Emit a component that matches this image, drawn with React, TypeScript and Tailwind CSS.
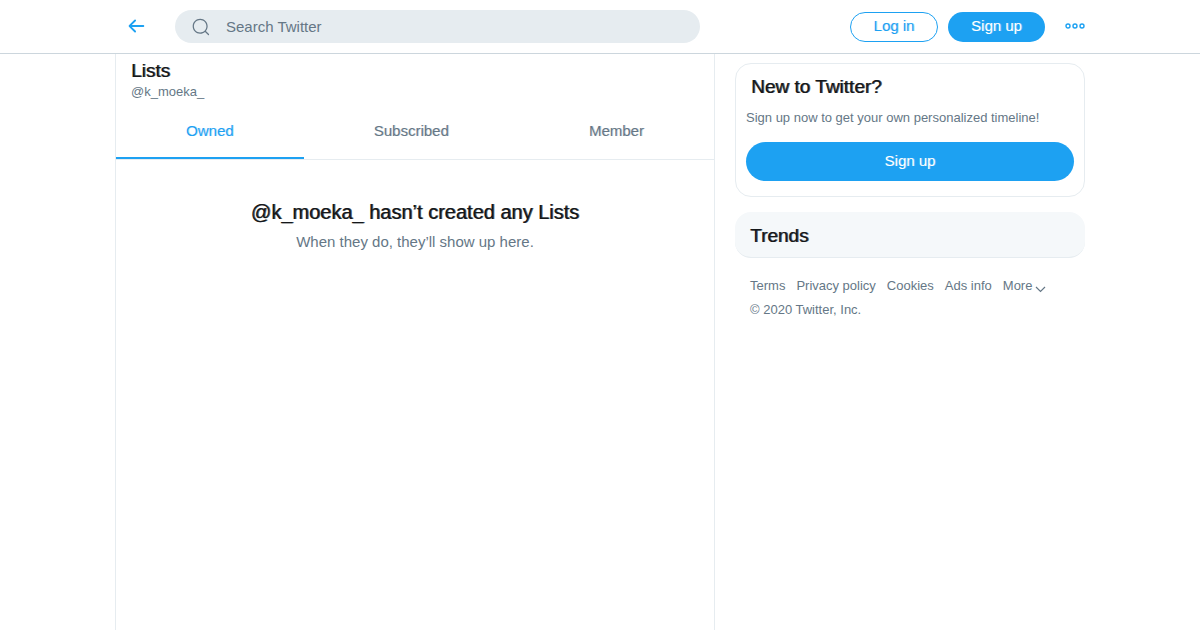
import { useState } from 'react';

const tabs = ['Owned', 'Subscribed', 'Member'];

const footerLinks = ['Terms', 'Privacy policy', 'Cookies', 'Ads info'];

// regular letter widths with slightly heavier strokes
const heading = 'leading-6 text-[#14171a] [text-shadow:1px_0_0_rgb(20_23_26/0.7)]';

function Header() {
  return (
    <header className="border-b border-[#ccd6dd] bg-white">
      <div className="mx-auto flex h-[53px] max-w-[970px] items-center">
        <button type="button" aria-label="Back" className="ml-2.5 shrink-0 pb-px text-[#1da1f2]">
          <svg viewBox="0 0 24 24" className="size-[22px]" fill="currentColor">
            <path d="M20 11H7.414l4.293-4.293a1 1 0 1 0-1.414-1.414l-6 6a1 1 0 0 0 0 1.414l6 6a.997.997 0 0 0 1.414 0 1 1 0 0 0 0-1.414L7.414 13H20a1 1 0 1 0 0-2z" />
          </svg>
        </button>

        <label className="ml-7 flex h-[33px] max-w-[525px] flex-1 items-center rounded-full bg-[#e6ecf0] pl-4">
          <svg viewBox="0 0 24 24" className="size-5 shrink-0" fill="#657786">
            <path d="M21.53 20.47l-3.66-3.66C19.195 15.24 20 13.214 20 11c0-4.97-4.03-9-9-9s-9 4.03-9 9 4.03 9 9 9c2.215 0 4.24-.804 5.808-2.13l3.66 3.66c.147.146.34.22.53.22s.385-.073.53-.22c.295-.293.295-.767.002-1.06zM3.5 11c0-4.135 3.365-7.5 7.5-7.5s7.5 3.365 7.5 7.5-3.365 7.5-7.5 7.5-7.5-3.365-7.5-7.5z" />
          </svg>
          <input
            type="search"
            aria-label="Search Twitter"
            placeholder="Search Twitter"
            className="ml-[15px] w-full bg-transparent text-[15px] leading-5 outline-none placeholder:text-[#657786]"
          />
        </label>

        <div className="ml-auto flex items-center">
          <button
            type="button"
            className="h-[30px] w-[88px] rounded-full border border-[#1da1f2] pb-0.5 text-[15px] leading-5 text-[#1da1f2] [text-shadow:1px_0_0_rgb(29_161_242/0.3)]"
          >
            Log in
          </button>
          <button
            type="button"
            className="ml-2.5 h-[30px] w-[97px] rounded-full bg-[#1da1f2] pb-0.5 text-[15px] leading-5 text-white [text-shadow:1px_0_0_rgb(255_255_255/0.3)]"
          >
            Sign up
          </button>
          <button type="button" aria-label="More menu" className="ml-5 pb-px text-[#1da1f2]">
            <svg viewBox="0 0 20 20" className="size-5" fill="none" stroke="currentColor" strokeWidth="1.4">
              <circle cx="3" cy="10" r="2" />
              <circle cx="10" cy="10" r="2" />
              <circle cx="17" cy="10" r="2" />
            </svg>
          </button>
        </div>
      </div>
    </header>
  );
}

function Lists() {
  const [active, setActive] = useState('Owned');

  return (
    <main className="max-w-[600px] flex-1 border-x border-[#e6ecf0]">
      <div className="px-[15px] pt-[5px]">
        <h1 className={`text-[19px] ${heading}`}>Lists</h1>
        <p className="text-[13px] leading-[18px] text-[#657786]">@k_moeka_</p>
      </div>

      <div role="tablist" className="mt-[3px] flex border-b border-[#e6ecf0]">
        {tabs.map((tab) => (
          <button
            key={tab}
            type="button"
            role="tab"
            aria-selected={tab === active}
            onClick={() => setActive(tab)}
            className={`h-[55px] flex-auto border-b-2 text-[15px] leading-5 ${
              tab === active
                ? 'border-[#1da1f2] text-[#1da1f2] [text-shadow:1px_0_0_rgb(29_161_242/0.3)]'
                : 'border-transparent text-[#657786] [text-shadow:1px_0_0_rgb(101_119_134/0.3)]'
            }`}
          >
            {tab}
          </button>
        ))}
      </div>

      <div className="px-5 pt-10 text-center">
        <h2 className={`text-[20px] ${heading}`}>@k_moeka_ hasn’t created any Lists</h2>
        <p className="mt-2 text-[15px] leading-5 text-[#657786]">When they do, they’ll show up here.</p>
      </div>
    </main>
  );
}

function Sidebar() {
  return (
    <aside className="ml-5 w-[350px] pt-[9px]">
      <section className="rounded-2xl border border-[#e6ecf0] px-2.5 pt-[11px] pb-[15px]">
        <h2 className={`px-[5px] text-[19px] ${heading}`}>New to Twitter?</h2>
        <p className="mt-[9px] text-[13px] leading-5 text-[#657786]">
          Sign up now to get your own personalized timeline!
        </p>
        <button
          type="button"
          className="mt-3.5 h-[39px] w-full rounded-full bg-[#1da1f2] pb-0.5 text-[15px] leading-5 text-white [text-shadow:1px_0_0_rgb(255_255_255/0.3)]"
        >
          Sign up
        </button>
      </section>

      <section className="mt-[15px] rounded-2xl border-b border-[#e6ecf0] bg-[#f5f8fa] px-[15px] pt-3 pb-[9px]">
        <h2 className={`text-[19px] ${heading}`}>Trends</h2>
      </section>

      <footer className="mt-4 px-[15px] text-[13px] leading-6 text-[#657786]">
        <nav className="flex gap-[11px]">
          {footerLinks.map((link) => (
            <a key={link} href="#">
              {link}
            </a>
          ))}
          <button type="button" className="flex items-center gap-[3px]">
            More
            <svg viewBox="0 0 11 11" className="mt-1.5 size-[11px]" fill="none" stroke="currentColor" strokeWidth="1.2">
              <path d="M1 3l4.5 4.5L10 3" />
            </svg>
          </button>
        </nav>
        <p>© 2020 Twitter, Inc.</p>
      </footer>
    </aside>
  );
}

export default function App() {
  return (
    <div className="flex min-h-screen flex-col bg-white font-['Liberation_Sans',Arial,sans-serif]">
      <Header />
      <div className="mx-auto flex w-full max-w-[970px] flex-1">
        <Lists />
        <Sidebar />
      </div>
    </div>
  );
}
